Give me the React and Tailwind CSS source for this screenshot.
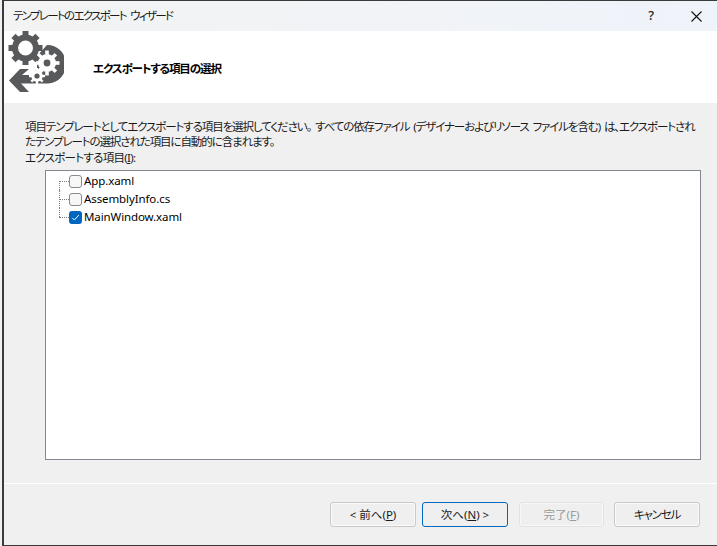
const fontClass = `[font-family:"Noto_Sans","Noto_Sans_CJK_JP",sans-serif] [font-feature-settings:"palt"]`;

const teeth8 = [0, 45, 90, 135, 180, 225, 270, 315];

const GearLogo = () => (
  <svg width="60" height="72" viewBox="4 31 60 72" className="block shrink-0">
    {/* return arrow */}
    <path
      fill="#58595b"
      d="M47 45A18.5 19.2 0 0 1 48 83.5H21L29 92H20L9 80.5L20 69H29L22 75H33L37 68L37 56Z"
    />
    {/* white gears cut out of the arrow */}
    <g transform="translate(47 63)">
      {teeth8.map((a) => (
        <rect key={a} x="-1.8" y="-12.5" width="3.6" height="5" fill="#fff" transform={`rotate(${a})`} />
      ))}
      <circle r="9" fill="#fff" />
      <circle r="3.4" fill="#58595b" />
    </g>
    <g transform="translate(37 76)">
      {teeth8.map((a) => (
        <rect key={a} x="-1.2" y="-8" width="2.4" height="3" fill="#fff" transform={`rotate(${a})`} />
      ))}
      <circle r="5.8" fill="#fff" />
      <circle r="2.6" fill="#58595b" />
    </g>
    {/* large gear */}
    <g transform="translate(25.5 48)" fill="#58595b">
      {teeth8.map((a) => (
        <rect key={a} x="-3" y="-17" width="6" height="6" transform={`rotate(${a})`} />
      ))}
      <path
        fillRule="evenodd"
        d="M0-13.5a13.5 13.5 0 1 0 0 27a13.5 13.5 0 1 0 0-27zM0-7.5a7.5 7.5 0 1 1 0 15a7.5 7.5 0 1 1 0-15z"
      />
    </g>
  </svg>
);

const TreeItem = ({ label, checked, first, last }) => (
  <div className="flex h-[18px] items-center">
    <div className="relative h-[18px] w-[10px] shrink-0">
      <div
        className={`absolute left-0 border-l border-dotted border-[#808080] ${
          first ? "top-[9px] h-[9px]" : last ? "top-0 h-[9px]" : "top-0 h-[18px]"
        }`}
      />
      <div className="absolute left-0 right-0 top-[9px] border-t border-dotted border-[#808080]" />
    </div>
    {checked ? (
      <div className="flex h-[13px] w-[13px] shrink-0 items-center justify-center rounded-[3px] bg-[#0067c0]">
        <svg width="9" height="9" viewBox="0 0 9 9">
          <path d="M1.2 4.8 3.4 7 7.8 2" fill="none" stroke="#fff" strokeWidth="1" />
        </svg>
      </div>
    ) : (
      <div className="h-[13px] w-[13px] shrink-0 rounded-[3px] border border-[#8a8a8a] bg-[#f7f7f7]" />
    )}
    <span className="ml-[2px] text-[11.5px] leading-[18px] tracking-[-0.1px] text-black">{label}</span>
  </div>
);

const WizardButton = ({ children, primary, disabled, className = "" }) => (
  <div
    className={`flex h-[25px] items-center justify-center rounded-[3px] border bg-[#efefef] text-[11.5px] ${className} ${
      primary
        ? "border-[#0067c0] text-[#1a1a1a]"
        : disabled
          ? "border-[#e2e2e2] text-[#9a9a9a] shadow-[inset_0_0_0_1px_#f8f8f8]"
          : "border-[#c8c8c8] text-[#1a1a1a] shadow-[inset_0_0_0_1px_#fbfbfb]"
    }`}
  >
    {children}
  </div>
);

const App = () => {
  return (
    <div className={`flex h-[546px] w-[717px] flex-col overflow-hidden bg-[#f0f0f0] pl-[2px] ${fontClass}`}>
      <div className="flex h-full flex-col border-b border-l-2 border-t border-[#3a3a3a]">
        {/* title bar */}
        <div className="flex h-[30px] shrink-0 items-center bg-gradient-to-r from-[#f3f3f3] to-[#eff3fa] pl-[9px]">
          <span className="text-[11.5px] tracking-[-1.7px] text-[#1a1a1a] [word-spacing:3px]">
            テンプレートのエクスポート ウィザード
          </span>
          <span className="ml-auto text-[13px] font-medium text-[#222]">?</span>
          <svg width="11" height="11" viewBox="0 0 11 11" className="ml-[37px] mr-[15px]">
            <path d="M.5.5 10.5 10.5M10.5.5.5 10.5" stroke="#111" strokeWidth="1.1" fill="none" />
          </svg>
        </div>

        {/* header */}
        <div className="flex h-[72px] shrink-0 items-center bg-white">
          <GearLogo />
          <span className="ml-[29px] pt-[4px] text-[11.5px] font-bold tracking-[-1.1px] text-black">
            エクスポートする項目の選択
          </span>
        </div>

        {/* body */}
        <div className="flex min-h-0 flex-1 flex-col pl-[21px] pr-[22px] pt-[16px]">
          <p className="text-[11.5px] leading-[15px] tracking-[-1.1px] text-[#1a1a1a] [word-spacing:2px]">
            項目テンプレートとしてエクスポートする項目を選択してください。 すべての依存ファイル (デザイナーおよびリソース ファイルを含む) は、エクスポートされたテンプレートの選択された項目に自動的に含まれます。
          </p>
          <div className="text-[11.5px] leading-[18px] tracking-[-0.7px] text-[#1a1a1a]">
            エクスポートする項目(<span className="underline">I</span>):
          </div>
          <div className="ml-[20px] mr-[-6px] mt-[3px] h-[290px] border border-[#828790] bg-white pl-[13px] pt-[1px]">
            <TreeItem label="App.xaml" first />
            <TreeItem label="AssemblyInfo.cs" />
            <TreeItem label="MainWindow.xaml" checked last />
          </div>
        </div>

        {/* footer */}
        <div className="flex h-[62px] shrink-0 items-start justify-end border-t border-white pr-[17px] pt-[18px]">
          <WizardButton className="w-[86px]">
            &lt; 前へ(<span className="underline">P</span>)
          </WizardButton>
          <WizardButton primary className="ml-[6px] w-[86px]">
            次へ(<span className="underline">N</span>) &gt;
          </WizardButton>
          <WizardButton disabled className="ml-[11px] w-[85px]">
            完了(<span className="underline">F</span>)
          </WizardButton>
          <WizardButton className="ml-[10px] w-[86px]">
            <span className="tracking-[-1.2px]">キャンセル</span>
          </WizardButton>
        </div>
      </div>
    </div>
  );
};

export default App;
